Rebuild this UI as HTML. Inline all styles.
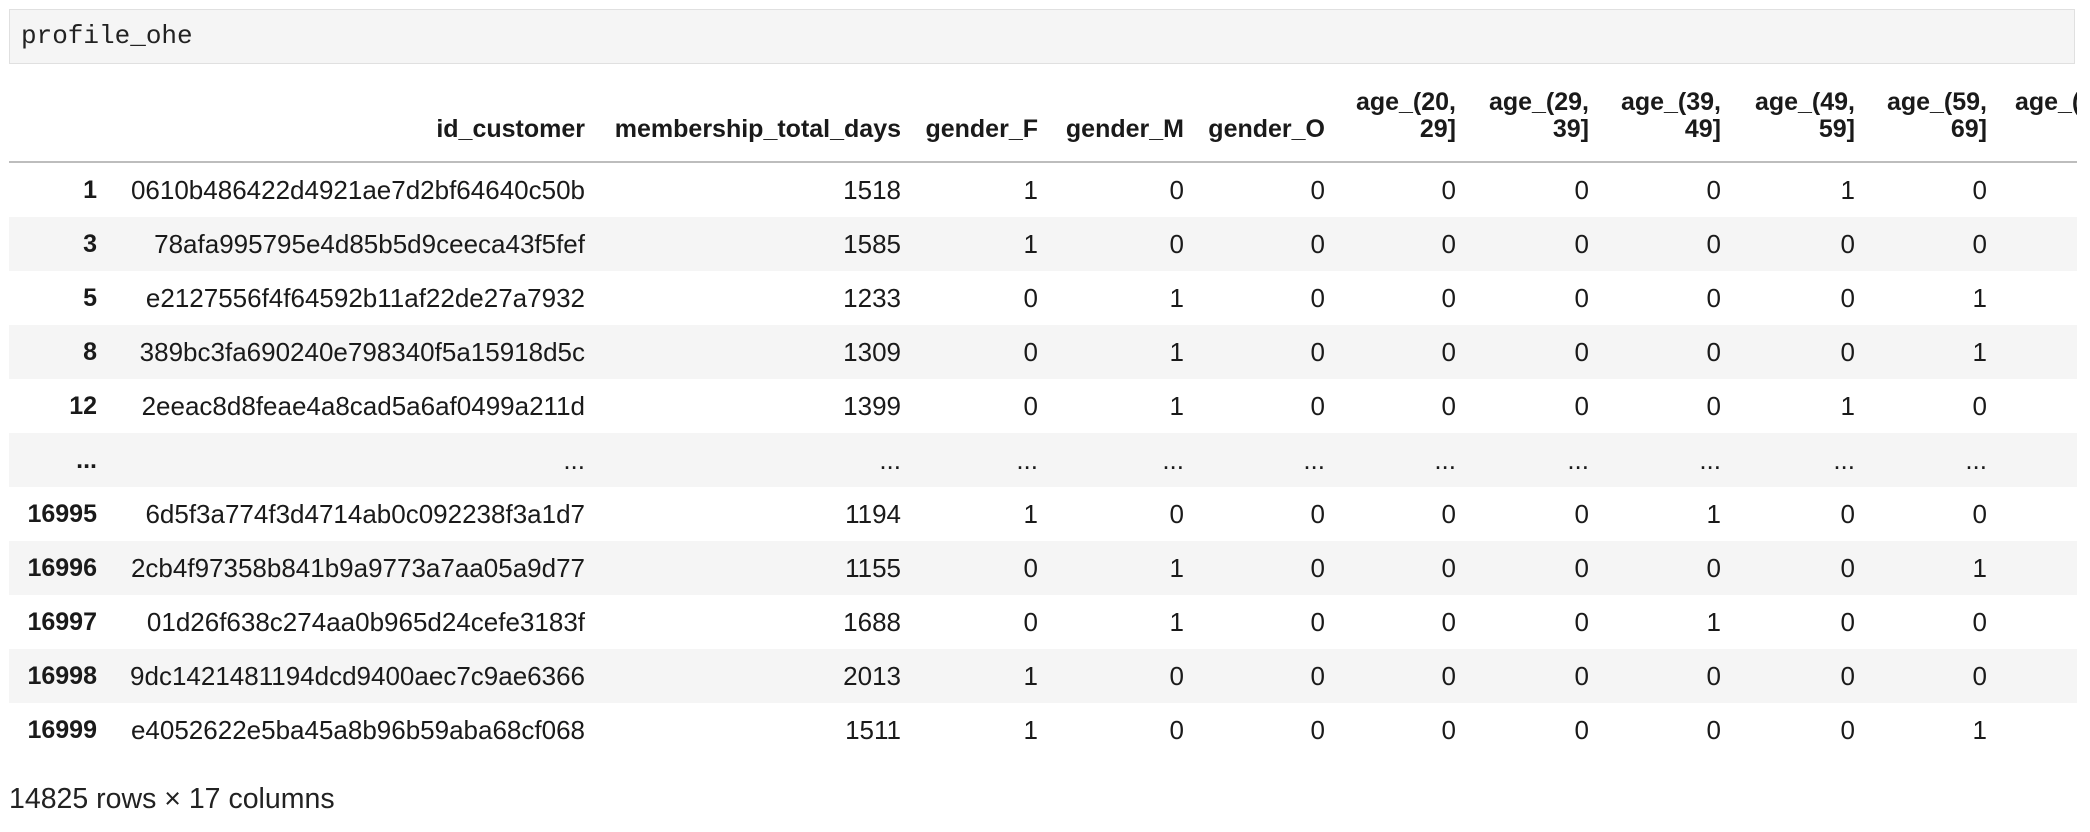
<!DOCTYPE html>
<html><head><meta charset="utf-8"><style>
body{margin:0;width:2090px;height:832px;background:#fff;overflow:hidden;font-family:"Liberation Sans",Arial,sans-serif;color:#1a1a1a}
.inp{position:absolute;left:9px;top:9px;width:2066px;height:55px;background:#f5f5f5;border:1px solid #e0e0e0;box-sizing:border-box}
.inp span{position:absolute;left:11px;top:11px;font-family:"Liberation Mono",monospace;font-size:26px;color:#222}
.wrap{position:absolute;left:9px;top:64px;width:2068px;height:700px;overflow:hidden}
table{border-collapse:collapse;table-layout:fixed;width:2106px;font-size:26px}
th,td{text-align:right;padding:0;white-space:nowrap}
thead th{height:98px;vertical-align:bottom;padding-bottom:18px;box-sizing:border-box;line-height:27px;border-bottom:2px solid #bdbdbd;font-size:25px}
tbody td,tbody th{height:54px}
tbody th{font-size:25px}
tbody tr:nth-child(even){background:#f5f5f5}
.foot{position:absolute;left:9px;top:783px;font-size:28.5px;color:#222}
</style></head><body>
<div class="inp"><span>profile_ohe</span></div>
<div class="wrap"><table>
<colgroup><col style="width:88px"><col style="width:488px"><col style="width:316px"><col style="width:137px"><col style="width:146px"><col style="width:141px"><col style="width:131px"><col style="width:133px"><col style="width:132px"><col style="width:134px"><col style="width:132px"><col style="width:128px"></colgroup>
<thead><tr><th></th><th>id_customer</th><th>membership_total_days</th><th>gender_F</th><th>gender_M</th><th>gender_O</th><th>age_(20,<br>29]</th><th>age_(29,<br>39]</th><th>age_(39,<br>49]</th><th>age_(49,<br>59]</th><th>age_(59,<br>69]</th><th>age_(69,<br>79]</th></tr></thead>
<tbody>
<tr><th>1</th><td>0610b486422d4921ae7d2bf64640c50b</td><td>1518</td><td>1</td><td>0</td><td>0</td><td>0</td><td>0</td><td>0</td><td>1</td><td>0</td><td>0</td></tr>
<tr><th>3</th><td>78afa995795e4d85b5d9ceeca43f5fef</td><td>1585</td><td>1</td><td>0</td><td>0</td><td>0</td><td>0</td><td>0</td><td>0</td><td>0</td><td>0</td></tr>
<tr><th>5</th><td>e2127556f4f64592b11af22de27a7932</td><td>1233</td><td>0</td><td>1</td><td>0</td><td>0</td><td>0</td><td>0</td><td>0</td><td>1</td><td>0</td></tr>
<tr><th>8</th><td>389bc3fa690240e798340f5a15918d5c</td><td>1309</td><td>0</td><td>1</td><td>0</td><td>0</td><td>0</td><td>0</td><td>0</td><td>1</td><td>0</td></tr>
<tr><th>12</th><td>2eeac8d8feae4a8cad5a6af0499a211d</td><td>1399</td><td>0</td><td>1</td><td>0</td><td>0</td><td>0</td><td>0</td><td>1</td><td>0</td><td>0</td></tr>
<tr><th>...</th><td>...</td><td>...</td><td>...</td><td>...</td><td>...</td><td>...</td><td>...</td><td>...</td><td>...</td><td>...</td><td>...</td></tr>
<tr><th>16995</th><td>6d5f3a774f3d4714ab0c092238f3a1d7</td><td>1194</td><td>1</td><td>0</td><td>0</td><td>0</td><td>0</td><td>1</td><td>0</td><td>0</td><td>0</td></tr>
<tr><th>16996</th><td>2cb4f97358b841b9a9773a7aa05a9d77</td><td>1155</td><td>0</td><td>1</td><td>0</td><td>0</td><td>0</td><td>0</td><td>0</td><td>1</td><td>0</td></tr>
<tr><th>16997</th><td>01d26f638c274aa0b965d24cefe3183f</td><td>1688</td><td>0</td><td>1</td><td>0</td><td>0</td><td>0</td><td>1</td><td>0</td><td>0</td><td>0</td></tr>
<tr><th>16998</th><td>9dc1421481194dcd9400aec7c9ae6366</td><td>2013</td><td>1</td><td>0</td><td>0</td><td>0</td><td>0</td><td>0</td><td>0</td><td>0</td><td>0</td></tr>
<tr><th>16999</th><td>e4052622e5ba45a8b96b59aba68cf068</td><td>1511</td><td>1</td><td>0</td><td>0</td><td>0</td><td>0</td><td>0</td><td>0</td><td>1</td><td>0</td></tr>
</tbody></table></div>
<div class="foot">14825 rows × 17 columns</div>
</body></html>
